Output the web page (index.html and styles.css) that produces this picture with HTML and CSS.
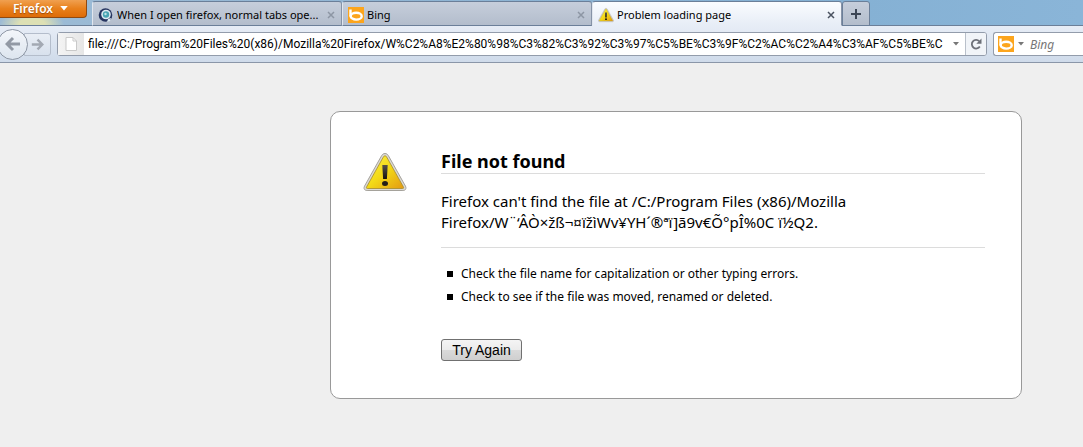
FILE: index.html
```html
<!DOCTYPE html>
<html lang="en">
<head>
    <meta charset="UTF-8">
    <meta name="viewport" content="width=device-width, initial-scale=1.0">
    <title>Problem loading page</title>
    <link rel="stylesheet" href="styles.css">
</head>
<body>
    <!-- Shared icons -->
    <svg class="sprite" aria-hidden="true">
        <defs>
            <linearGradient id="warnFill" x1="0" y1="0" x2="1" y2="1">
                <stop offset="0" stop-color="#fff34a"/>
                <stop offset="0.5" stop-color="#f3d916"/>
                <stop offset="1" stop-color="#e39a12"/>
            </linearGradient>
            <linearGradient id="warnMark" x1="0" y1="0" x2="0" y2="1">
                <stop offset="0" stop-color="#55504a"/>
                <stop offset="1" stop-color="#17130e"/>
            </linearGradient>
        </defs>
        <symbol id="warning" viewBox="0 0 44 40">
            <path d="M22 1.500c1.500 0 2.600.8 3.400 2.200l17 30.300c1.300 2.500.2 4.500-2.500 4.500H4.100c-2.700 0-3.800-2-2.500-4.500l17-30.300C19.400 2.300 20.500 1.500 22 1.500z" fill="#dcdad4" stroke="#a5a29b" stroke-width="1"/>
            <path d="M22 3.800c.7 0 1.200.4 1.600 1.100l16.800 30c.5 1 .2 1.600-.8 1.600H4.400c-1 0-1.300-.6-.8-1.600l16.800-30c.4-.7.900-1.100 1.600-1.100z" fill="url(#warnFill)" stroke="#a58a2a" stroke-width="0.8"/>
            <path d="M19.300 13h5.400l-.8 14h-3.800z" fill="url(#warnMark)"/>
            <ellipse cx="22" cy="31.500" rx="3" ry="2.500" fill="#241e17"/>
        </symbol>
        <symbol id="bing" viewBox="0 0 16 16">
            <rect width="16" height="16" fill="#fca51d"/>
            <path d="M2.500 2.500v7" stroke="#fff" stroke-width="2.400" fill="none"/>
            <ellipse cx="8.200" cy="9.200" rx="5.500" ry="3.400" stroke="#fff" stroke-width="2.400" fill="none"/>
        </symbol>
        <symbol id="close" viewBox="0 0 8 8">
            <path d="M1 1l6 6M7 1L1 7" stroke="currentColor" stroke-width="1.500" fill="none"/>
        </symbol>
        <symbol id="caret" viewBox="0 0 6 4">
            <path d="M0 0h6L3 3.500z" fill="currentColor"/>
        </symbol>
    </svg>

    <header class="browser">
        <div class="tab-strip">
            <button class="app-button" type="button">
                Firefox
                <svg class="app-caret"><use href="#caret"/></svg>
            </button>
            <nav class="tabs" aria-label="Tabs">
                <div class="tab">
                    <svg class="favicon" viewBox="0 0 16 16">
                        <circle cx="7.500" cy="8" r="6.800" fill="#263560"/>
                        <circle cx="8" cy="7.500" r="4.800" fill="#dcebf2"/>
                        <circle cx="8" cy="7.500" r="3.200" fill="#48a5b4"/>
                        <circle cx="7.500" cy="7" r="1.200" fill="#bfe3e6"/>
                        <path d="M10 12l3-1-1 3-3 1z" fill="#dcebf2"/>
                    </svg>
                    <a class="tab-title" href="#">When I open firefox, normal tabs ope...</a>
                    <button class="tab-close" type="button" aria-label="Close tab"><svg><use href="#close"/></svg></button>
                </div>
                <div class="tab">
                    <svg class="favicon"><use href="#bing"/></svg>
                    <a class="tab-title" href="#">Bing</a>
                    <button class="tab-close" type="button" aria-label="Close tab"><svg><use href="#close"/></svg></button>
                </div>
                <div class="tab active">
                    <svg class="favicon"><use href="#warning"/></svg>
                    <a class="tab-title" href="#" aria-current="page">Problem loading page</a>
                    <button class="tab-close" type="button" aria-label="Close tab"><svg><use href="#close"/></svg></button>
                </div>
                <button class="new-tab" type="button" aria-label="New tab">
                    <svg viewBox="0 0 12 12"><path d="M6 1v10M1 6h10" stroke="#3c4656" stroke-width="2"/></svg>
                </button>
            </nav>
        </div>

        <div class="toolbar">
            <div class="history">
                <button class="back" type="button" aria-label="Back">
                    <svg viewBox="0 0 16 16"><path d="M8 2L2 8l6 6M2.500 8H15" fill="none" stroke="#9299a4" stroke-width="3"/></svg>
                </button>
                <button class="forward" type="button" aria-label="Forward">
                    <svg viewBox="0 0 16 16"><path d="M8 2l6 6-6 6M13.500 8H1" fill="none" stroke="#a3a9b3" stroke-width="3"/></svg>
                </button>
            </div>

            <div class="url-bar">
                <span class="identity">
                    <svg viewBox="0 0 12 14"><path d="M1 .5h7l3.500 3.500v9.500H1z" fill="#fff" stroke="#c9c9c9"/><path d="M8 .5V4h3.500" fill="none" stroke="#c9c9c9"/></svg>
                </span>
                <input class="url-input" type="text" aria-label="Address" value="file:///C:/Program%20Files%20(x86)/Mozilla%20Firefox/W%C2%A8%E2%80%98%C3%82%C3%92%C3%97%C5%BE%C3%9F%C2%AC%C2%A4%C3%AF%C5%BE%C">
                <button class="url-drop" type="button" aria-label="Show history"><svg><use href="#caret"/></svg></button>
                <button class="reload" type="button" aria-label="Reload">
                    <svg viewBox="0 0 12 12"><path d="M9.800 8.500a4.300 4.300 0 1 1-.6-5.300" fill="none" stroke="#6d7078" stroke-width="1.800"/><path d="M11.500.5v5.200H6.300z" fill="#6d7078"/></svg>
                </button>
            </div>

            <div class="search-bar">
                <button class="engine" type="button" aria-label="Choose search engine">
                    <svg class="favicon"><use href="#bing"/></svg>
                    <svg class="engine-caret"><use href="#caret"/></svg>
                </button>
                <input class="search-input" type="text" aria-label="Search" placeholder="Bing">
            </div>
        </div>
    </header>

    <main class="error-page">
        <svg class="error-icon"><use href="#warning"/></svg>
        <div class="error-content">
            <h1>File not found</h1>
            <p class="description">Firefox can't find the file at /C:/Program Files (x86)/Mozilla<br>Firefox/W¨‘ÂÒ×žß¬¤ïžìWv¥YH´®ªï]ã9v€Õ°pÎ%0C ï½Q2.</p>
            <ul class="suggestions">
                <li>Check the file name for capitalization or other typing errors.</li>
                <li>Check to see if the file was moved, renamed or deleted.</li>
            </ul>
            <button class="try-again" type="button">Try Again</button>
        </div>
    </main>
</body>
</html>
```
FILE: styles.css
```css
:root {
    --chrome-border: #8a96a8;
    --tab-line: #6b7f99;
    --page-bg: #efefef;
    --card-border: #999;
    --rule: #dcdcdc;
}

* {
    margin: 0;
    padding: 0;
    box-sizing: border-box;
}

body {
    background-color: var(--page-bg);
    font-family: "Noto Sans", "Open Sans", sans-serif;
    font-size: 12px;
    color: #000;
    overflow-x: hidden;
}

button,
input {
    font: inherit;
    color: inherit;
    border: none;
    background: none;
    outline: none;
}

svg {
    display: block;
    flex: none;
}

.sprite {
    position: absolute;
    width: 0;
    height: 0;
}

/* Tab strip */
.tab-strip {
    display: flex;
    align-items: flex-end;
    gap: 5px;
    height: 26px;
    background:
        radial-gradient(ellipse 32px 14px at 32px 24px, #dde0b4 40%, transparent),
        linear-gradient(to right, #9dbbd5, #84b0d3 75%, #8ab5d8);
    box-shadow: inset 0 -1px var(--tab-line);
}

.app-button {
    display: flex;
    align-items: center;
    justify-content: center;
    gap: 7px;
    align-self: flex-start;
    width: 87px;
    height: 18px;
    padding-right: 5px;
    background: linear-gradient(#f0a050, #e8801c 50%, #de6c08);
    border: 1px solid #8f4a12;
    border-top: none;
    border-left: none;
    border-radius: 0 0 4px 0;
    color: #fff;
    font-weight: 600;
    line-height: 16px;
    text-shadow: 0 1px 1px #9a4a08;
}

.app-caret {
    width: 8px;
    height: 5px;
}

.tabs {
    display: flex;
    flex: 1;
    height: 25px;
}

.tab {
    display: flex;
    align-items: center;
    flex: 0 1 250px;
    min-width: 0;
    padding: 2px 6px 0 5px;
    background: linear-gradient(#c6cedb, #b3bdcc);
    border: 1px solid var(--tab-line);
    border-right-color: #8693a7;
    border-left-color: #e0e6ee;
    border-radius: 3px 3px 0 0;
    font-size: 11px;
}

.tab.active {
    background: linear-gradient(#fafcff, #e7edf6);
    border-bottom-color: #e7edf6;
}

.favicon {
    width: 16px;
    height: 16px;
}

.tab-title {
    flex: 1;
    min-width: 0;
    margin-left: 3px;
    overflow: hidden;
    white-space: nowrap;
    color: #000;
    text-decoration: none;
}

.tab-close {
    color: #8d96a4;
}

.tab-close svg {
    width: 8px;
    height: 8px;
}

.active .tab-close {
    color: #4a5260;
}

.new-tab {
    display: flex;
    align-items: center;
    justify-content: center;
    width: 28px;
    background: linear-gradient(#c6cedb, #b3bdcc);
    border: 1px solid var(--tab-line);
    border-radius: 3px 3px 0 0;
}

.new-tab svg {
    width: 12px;
    height: 12px;
}

/* Navigation toolbar */
.toolbar {
    display: flex;
    align-items: center;
    gap: 6px;
    height: 37px;
    background: linear-gradient(#e7edf6, #cfdbea);
    border-bottom: 1px solid var(--chrome-border);
}

.history {
    display: flex;
    align-items: center;
    width: 51px;
}

.back {
    display: flex;
    align-items: center;
    justify-content: center;
    flex: none;
    z-index: 1;
    width: 31px;
    height: 31px;
    margin-left: -3px;
    background: linear-gradient(#f3f6fa, #dde5ef);
    border: 1px solid #8e97a5;
    border-radius: 50%;
}

.forward {
    display: flex;
    align-items: center;
    justify-content: flex-end;
    flex: 1;
    height: 23px;
    margin-left: -4px;
    padding-right: 6px;
    background: linear-gradient(#e9eef5, #d8e1ed);
    border: 1px solid #b4bdcb;
    border-radius: 0 3px 3px 0;
}

.back svg {
    width: 16px;
    height: 16px;
}

.forward svg {
    width: 13px;
    height: 13px;
}

.url-bar,
.search-bar {
    display: flex;
    align-items: center;
    height: 24px;
    min-width: 0;
    background-color: #fff;
    border: 1px solid #939cab;
    border-radius: 3px;
}

.url-bar {
    flex: 1;
}

.identity {
    display: flex;
    align-items: center;
    justify-content: center;
    align-self: stretch;
    width: 26px;
    background: linear-gradient(to right, #f4f4f4, #e6e6e6);
}

.identity svg {
    width: 12px;
    height: 14px;
}

.url-input {
    flex: 1;
    min-width: 0;
    margin-left: 4px;
    font-family: Roboto, "Open Sans", sans-serif;
}

.url-drop {
    padding: 0 6px;
    color: #777;
}

.url-drop svg,
.engine-caret {
    width: 6px;
    height: 4px;
}

.reload {
    display: flex;
    align-items: center;
    justify-content: center;
    align-self: stretch;
    width: 21px;
    background-color: #f1f4f8;
    border-left: 1px solid #b9c0ca;
    border-radius: 0 2px 2px 0;
}

.reload svg {
    width: 12px;
    height: 12px;
}

.search-bar {
    flex: 0 0 90px;
    border-right: none;
    border-radius: 3px 0 0 3px;
}

.engine {
    display: flex;
    align-items: center;
    gap: 4px;
    padding-left: 4px;
    color: #777;
}

.search-input {
    flex: 1;
    min-width: 0;
    margin-left: 6px;
}

.search-input::placeholder {
    color: #777;
    font-style: italic;
}

/* Error card */
.error-page {
    display: flex;
    align-items: flex-start;
    gap: 34px;
    margin: 48px 61px 48px 330px;
    padding: 38px 36px 37px 32px;
    background-color: #fff;
    border: 1px solid var(--card-border);
    border-radius: 10px;
}

.error-icon {
    width: 44px;
    height: 40px;
    margin-top: 2px;
}

.error-content {
    flex: 1;
    min-width: 0;
}

.error-content h1 {
    font-size: 18px;
    line-height: 23px;
    border-bottom: 1px solid var(--rule);
}

.description {
    padding: 17px 0 14px;
    border-bottom: 1px solid var(--rule);
    font-size: 15px;
    line-height: 21px;
}

.suggestions {
    margin-top: 14px;
    padding-left: 6px;
    list-style: none;
    line-height: 23px;
}

.suggestions li {
    display: flex;
    align-items: center;
    gap: 8px;
}

.suggestions li::before {
    content: "";
    width: 6px;
    height: 6px;
    background-color: #000;
}

.try-again {
    margin-top: 31px;
    width: 81px;
    height: 22px;
    background: linear-gradient(#f4f4f4, #ebebeb 50%, #dadada 50%, #cfcfcf);
    border: 1px solid #707070;
    border-radius: 3px;
    font-family: "Liberation Sans", Arial, sans-serif;
    font-size: 14px;
    line-height: 20px;
}
```
